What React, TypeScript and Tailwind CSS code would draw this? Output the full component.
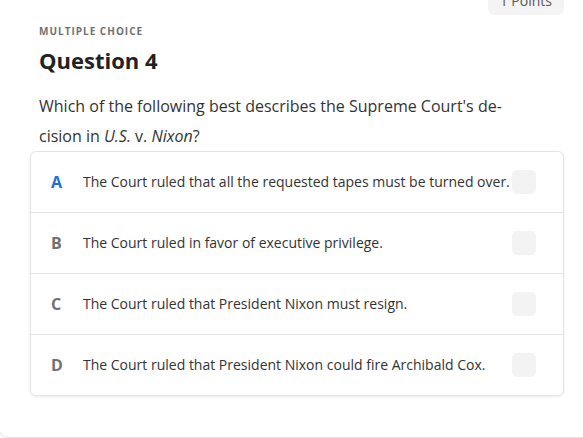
const options = [
  { letter: "A", text: "The Court ruled that all the requested tapes must be turned over.", active: true },
  { letter: "B", text: "The Court ruled in favor of executive privilege.", active: false },
  { letter: "C", text: "The Court ruled that President Nixon must resign.", active: false },
  { letter: "D", text: "The Court ruled that President Nixon could fire Archibald Cox.", active: false },
];

export default function App() {
  return (
    <div
      className="h-[438px] w-[583px] overflow-hidden bg-white"
      style={{ fontFamily: '"Open Sans", "Liberation Sans", sans-serif' }}
    >
      <div className="-ml-px -mt-[20px] w-[596px] rounded-lg border border-[#e3e3e3] bg-white px-[30px] pb-[41px] pt-[6px]">
        {/* Points badge */}
        <div className="flex justify-end">
          <div className="flex h-[28px] items-center rounded-md bg-[#f4f4f4] px-3 text-sm text-[#555]">
            1 Points
          </div>
        </div>

        <div className="pl-[9px]">
          <p className="mt-[9px] text-[10px] font-bold leading-[14px] tracking-[0.1em] text-[#707070]">
            MULTIPLE CHOICE
          </p>
          <h2 className="mt-[7px] text-[22px] font-bold leading-[30px] text-[#222]">Question 4</h2>
          <p className="mt-[16px] text-base leading-[30px] text-[#333]">
            Which of the following best describes the Supreme Court's de-
            <br />
            cision in <i>U.S.</i> v. <i>Nixon</i>?
          </p>
        </div>

        <div className="rounded-md border border-[#e3e3e3] shadow-[0_1px_3px_rgba(0,0,0,0.08)]">
          {options.map((o, i) => (
            <div
              key={o.letter}
              className={`flex items-center pl-[20px] pr-[27px] ${i > 0 ? "h-[61px] border-t border-[#e3e3e3]" : "h-[60px]"}`}
            >
              <span
                className={`w-[12px] shrink-0 text-base font-bold ${o.active ? "text-[#1f6fd8]" : "text-[#707070]"}`}
              >
                {o.letter}
              </span>
              <span className="ml-[20px] whitespace-nowrap text-sm text-[#333]">{o.text}</span>
              <div className="ml-auto h-[24px] w-[24px] shrink-0 rounded-[5px] bg-[#f3f3f3]" />
            </div>
          ))}
        </div>
      </div>
    </div>
  );
}
